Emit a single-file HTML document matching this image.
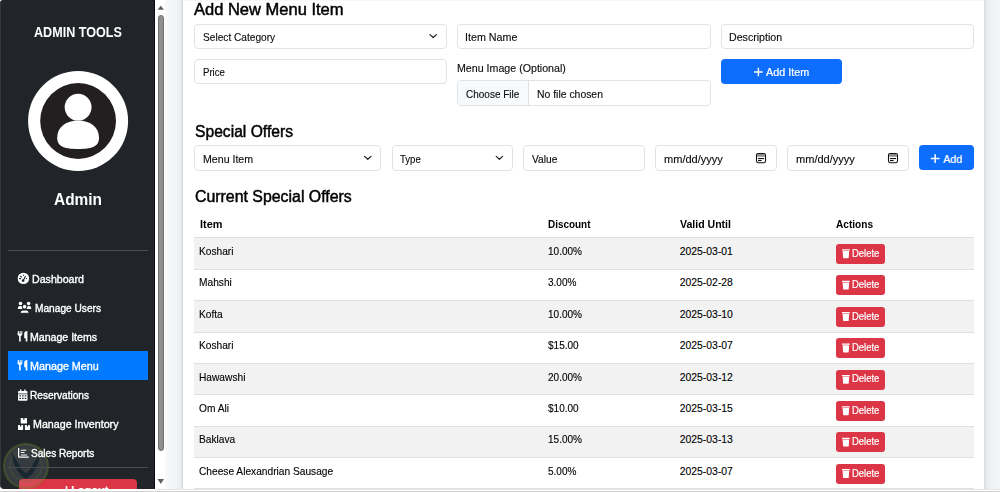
<!DOCTYPE html>
<html><head><meta charset="utf-8">
<style>
*{box-sizing:border-box;margin:0;padding:0}
html,body{width:1000px;height:492px;overflow:hidden;background:#fff}
body{position:relative;font-family:"Liberation Sans",sans-serif;color:#212529}
.a{position:absolute;white-space:nowrap;line-height:1;transform-origin:0 0}
</style></head><body>
<div style="position:absolute;left:155px;top:0px;width:845px;height:489px;background:#f1f3f5"></div>
<div style="position:absolute;left:165px;top:0px;width:18px;height:489px;background:linear-gradient(90deg,#f8f9fa,#f1f2f4 12px,#eaecee 16px,#cfd2d4 18px)"></div>
<div style="position:absolute;left:183px;top:0px;width:801px;height:489px;background:#fff"></div>
<div style="position:absolute;left:984px;top:0px;width:16px;height:489px;background:linear-gradient(90deg,#d9dcdf,#e6e8eb 2px,#eef0f2 5px,#f5f6f7)"></div>
<div style="position:absolute;left:183px;top:0px;width:801px;height:1px;background:#f7f7f7"></div>
<div style="position:absolute;left:155px;top:0px;width:10px;height:489px;background:#fff"></div>
<div style="position:absolute;left:158px;top:15px;width:5.8px;height:436px;background:#8f8f8f;border:1px solid #707070;border-radius:3px"></div>
<svg style="position:absolute;left:0;top:0" width="1000" height="492"><path d="M157.5 9.8 L160.8 5.7 L164 9.8Z" fill="#606060"/><path d="M157.5 479 L160.8 484 L164 479Z" fill="#606060"/></svg>
<div style="position:absolute;left:0px;top:489px;width:1000px;height:2px;background:#fff"></div>
<div style="position:absolute;left:155px;top:489px;width:845px;height:1px;background:#e4e4e4"></div>
<div style="position:absolute;left:0px;top:491px;width:1000px;height:1px;background:#cfcfcf"></div>
<div style="position:absolute;left:0px;top:0px;width:155px;height:489px;background:#212529;border-radius:3px 0 0 4px;border-left:1px solid #34383d;border-right:1px solid #0c0d0f"></div>
<div style="position:absolute;left:19px;top:479.3px;width:118px;height:9.7px;background:#dc3545;border-radius:4px 4px 0 0"></div>
<div style="position:absolute;left:19px;top:479px;width:118px;height:10px;overflow:hidden"><div style="position:absolute;left:35px;top:6.2px;font-size:11px;line-height:1;color:#fff;font-weight:700;white-space:nowrap">&#x2192;| Logout</div></div>
<svg style="position:absolute;left:0;top:0" width="60" height="492">
<defs><filter id="bl" x="-20%" y="-20%" width="140%" height="140%"><feGaussianBlur stdDeviation="0.6"/></filter></defs>
<g filter="url(#bl)">
<circle cx="26" cy="466" r="21.5" fill="rgba(185,190,195,0.14)"/>
<circle cx="26" cy="466" r="22" fill="none" stroke="rgba(110,150,45,0.36)" stroke-width="1.8"/>
<circle cx="26" cy="465.5" r="16" fill="none" stroke="rgba(95,130,40,0.22)" stroke-width="1.4"/>
<path d="M11.5 452 C13 466 19 475 26 479 C33 475 39 466 40.5 452 C37 458 35 462 33 464 C31 469 28 472 26 473 C24 472 21 469 19 464 C17 462 15 458 11.5 452Z" fill="rgba(5,20,35,0.55)"/>
</g>
</svg>
<div style="position:absolute;left:8px;top:250px;width:140px;height:1px;background:#4b4f54"></div>
<div style="position:absolute;left:8px;top:467px;width:140px;height:1px;background:#4b4f54"></div>
<div style="position:absolute;left:8px;top:351px;width:140px;height:29px;background:#007bff"></div>
<div class="a" style="left:33.90px;top:26px;font-size:13.8px;font-weight:700;color:#fff;transform:scaleX(0.9125);">ADMIN TOOLS</div>
<div class="a" style="left:54.30px;top:192px;font-size:16px;font-weight:700;color:#fff;transform:scaleX(0.9633);">Admin</div>
<div class="a" style="left:32.00px;top:274px;font-size:10.6px;font-weight:400;color:#fff;transform:scaleX(1.0020);-webkit-text-stroke:0.35px #fff;">Dashboard</div>
<div class="a" style="left:34.54px;top:303px;font-size:10.6px;font-weight:400;color:#fff;transform:scaleX(0.9588);-webkit-text-stroke:0.35px #fff;">Manage Users</div>
<div class="a" style="left:30.40px;top:332px;font-size:10.6px;font-weight:400;color:#fff;transform:scaleX(0.9985);-webkit-text-stroke:0.35px #fff;">Manage Items</div>
<div class="a" style="left:30.38px;top:361px;font-size:10.6px;font-weight:400;color:#fff;transform:scaleX(1.0152);-webkit-text-stroke:0.35px #fff;">Manage Menu</div>
<div class="a" style="left:30.15px;top:390px;font-size:10.6px;font-weight:400;color:#fff;transform:scaleX(0.9541);-webkit-text-stroke:0.35px #fff;">Reservations</div>
<div class="a" style="left:32.99px;top:419px;font-size:10.6px;font-weight:400;color:#fff;transform:scaleX(1.0083);-webkit-text-stroke:0.35px #fff;">Manage Inventory</div>
<div class="a" style="left:31.35px;top:448px;font-size:10.6px;font-weight:400;color:#fff;transform:scaleX(0.9508);-webkit-text-stroke:0.35px #fff;">Sales Reports</div>
<svg style="position:absolute;left:0;top:0" width="160" height="492">
<circle cx="78.1" cy="121" r="50" fill="#fff"/>
<circle cx="78.1" cy="121" r="37.9" fill="#231f20"/>
<circle cx="78.1" cy="107.2" r="13.4" fill="#fff"/>
<path d="M57.2 137.5 C57.2 127 66.5 120.6 78.1 120.6 C89.7 120.6 99 127 99 137.5 C99 145.5 94 148.9 78.1 149.1 C62.2 148.9 57.2 145.5 57.2 137.5Z" fill="#fff"/>
</svg>
<svg style="position:absolute;left:0;top:0" width="160" height="492">
<g fill="#fff">
<circle cx="23.4" cy="278.4" r="5.7"/>
</g>
<g fill="#212529" stroke="#212529">
<circle cx="23.4" cy="275.2" r="0.6" stroke="none"/>
<path d="M20.3 276.4 l1.3 0.5" stroke-width="1.1" stroke-linecap="round"/>
<path d="M19.4 278.6 h1.3" stroke-width="1.1" stroke-linecap="round"/>
<circle cx="26.5" cy="278.6" r="0.65" stroke="none"/>
<path d="M23.3 280.5 L25.4 276.5" stroke-width="1.1" stroke-linecap="round"/>
<circle cx="23.1" cy="280.6" r="1.3" stroke="none"/>
</g>
<g fill="#fff">
<circle cx="20.5" cy="303.5" r="1.8"/>
<path d="M17.9 308.9 v-0.9 q0 -2 2 -2 h0.6 q2 0 2 2 v0.9Z"/>
<circle cx="28.6" cy="303.5" r="1.8"/>
<path d="M26.6 308.9 v-0.9 q0 -2 2 -2 h0.6 q2 0 2 2 v0.9Z"/>
</g>
<g fill="#fff" stroke="#212529" stroke-width="1">
<circle cx="24.6" cy="306.7" r="2.3"/>
<path d="M20.3 313.3 v-0.6 q0 -2.6 2.6 -2.6 h3.4 q2.6 0 2.6 2.6 v0.6Z"/>
</g>
<g fill="#fff" transform="translate(0 0)">
<path d="M18 331 h0.9 v2.6 h0.8 v-2.6 h0.9 v2.6 h0.8 v-2.6 h0.9 v3 q0 1.7 -1.6 2 v5.6 h-1.6 v-5.6 q-1.6 -0.3 -1.6 -2Z"/>
<path d="M27.4 331 v10.6 h-1.7 v-3.4 h-1.5 v-4.6 q0 -2.3 3.2 -2.6Z"/>
</g>
<g fill="#fff" transform="translate(0 29)">
<path d="M18 331 h0.9 v2.6 h0.8 v-2.6 h0.9 v2.6 h0.8 v-2.6 h0.9 v3 q0 1.7 -1.6 2 v5.6 h-1.6 v-5.6 q-1.6 -0.3 -1.6 -2Z"/>
<path d="M27.4 331 v10.6 h-1.7 v-3.4 h-1.5 v-4.6 q0 -2.3 3.2 -2.6Z"/>
</g>
<g fill="#fff">
<rect x="20" y="389.5" width="1.4" height="2.5"/><rect x="24.2" y="389.5" width="1.4" height="2.5"/>
<path d="M18 392 q0 -1 1 -1 h7.5 q1 0 1 1 v1.6 h-9.5Z"/>
<path d="M18 394.3 h9.5 v5.5 q0 1 -1 1 h-7.5 q-1 0 -1 -1Z"/>
</g>
<g fill="#212529">
<rect x="19.3" y="395.3" width="1.6" height="1.2"/><rect x="22" y="395.3" width="1.6" height="1.2"/><rect x="24.7" y="395.3" width="1.6" height="1.2"/>
<rect x="19.3" y="397.8" width="1.6" height="1.2"/><rect x="22" y="397.8" width="1.6" height="1.2"/><rect x="24.7" y="397.8" width="1.6" height="1.2"/>
</g>
<g fill="#fff">
<rect x="20.7" y="418" width="6.3" height="5.5" rx="0.6"/>
<rect x="18" y="424.9" width="5.1" height="5.1" rx="0.6"/>
<rect x="24.9" y="424.9" width="5.1" height="5.1" rx="0.6"/>
</g>
<g fill="#212529">
<rect x="23.2" y="418" width="1.3" height="1.6"/>
<rect x="20" y="424.9" width="1.2" height="1.5"/>
<rect x="26.9" y="424.9" width="1.2" height="1.5"/>
</g>
<g fill="#fff">
<path d="M18 448 h1.25 v8.6 h9.55 v1.2 h-9.6 q-1.2 0 -1.2 -1.2Z"/>
<rect x="20.7" y="449.7" width="5.5" height="1.0" rx="0.5"/>
<rect x="20.7" y="452.1" width="3.9" height="1.0" rx="0.5"/>
<rect x="20.7" y="454.5" width="6.5" height="1.0" rx="0.5"/>
</g>
</svg>
<div class="a" style="left:194.00px;top:2px;font-size:15.6px;font-weight:400;color:#000;transform:scaleX(1.0582);-webkit-text-stroke:0.45px #000;">Add New Menu Item</div>
<div style="position:absolute;left:194px;top:24px;width:253px;height:25px;background:#fff;border:1px solid #e1e4e7;border-radius:4px"></div>
<div style="position:absolute;left:457px;top:24px;width:254px;height:25px;background:#fff;border:1px solid #e1e4e7;border-radius:4px"></div>
<div style="position:absolute;left:721px;top:24px;width:253px;height:25px;background:#fff;border:1px solid #e1e4e7;border-radius:4px"></div>
<div class="a" style="left:202.75px;top:33px;font-size:10.4px;font-weight:400;color:#0a0c0e;transform:scaleX(0.9764);-webkit-text-stroke:0.2px rgba(0,0,0,0.6);">Select Category</div>
<div class="a" style="left:465.37px;top:33px;font-size:10.4px;font-weight:400;color:#0a0c0e;transform:scaleX(1.0320);-webkit-text-stroke:0.2px rgba(0,0,0,0.6);">Item Name</div>
<div class="a" style="left:729.40px;top:33px;font-size:10.4px;font-weight:400;color:#0a0c0e;transform:scaleX(1.0231);-webkit-text-stroke:0.2px rgba(0,0,0,0.6);">Description</div>
<div style="position:absolute;left:194px;top:59px;width:253px;height:25px;background:#fff;border:1px solid #e1e4e7;border-radius:4px"></div>
<div class="a" style="left:202.80px;top:68px;font-size:10.4px;font-weight:400;color:#0a0c0e;transform:scaleX(0.9250);-webkit-text-stroke:0.2px rgba(0,0,0,0.6);">Price</div>
<div class="a" style="left:457.40px;top:64px;font-size:10.4px;font-weight:400;color:#0a0c0e;transform:scaleX(1.0245);-webkit-text-stroke:0.2px rgba(0,0,0,0.6);">Menu Image (Optional)</div>
<div style="position:absolute;left:457px;top:80px;width:254px;height:26px;background:#fff;border:1px solid #e1e4e7;border-radius:4px"></div>
<div style="position:absolute;left:458px;top:81px;width:71px;height:24px;background:#f8f9fa;border-right:1px solid #dee2e6;border-radius:3px 0 0 3px"></div>
<div class="a" style="left:465.70px;top:90px;font-size:10.4px;font-weight:400;color:#0a0c0e;transform:scaleX(0.9625);-webkit-text-stroke:0.2px rgba(0,0,0,0.6);">Choose File</div>
<div class="a" style="left:536.70px;top:90px;font-size:10.4px;font-weight:400;color:#0a0c0e;transform:scaleX(1.0015);-webkit-text-stroke:0.2px rgba(0,0,0,0.6);">No file chosen</div>
<div style="position:absolute;left:721px;top:59px;width:121px;height:25px;background:#0d6efd;border-radius:4px"></div>
<div class="a" style="left:766.30px;top:67px;font-size:10.6px;font-weight:400;color:#fff;transform:scaleX(1.0167);-webkit-text-stroke:0.2px #fff;">Add Item</div>
<div class="a" style="left:194.60px;top:124px;font-size:15.6px;font-weight:400;color:#000;transform:scaleX(1.0031);-webkit-text-stroke:0.45px #000;">Special Offers</div>
<div style="position:absolute;left:194px;top:145px;width:187px;height:26px;background:#fff;border:1px solid #e1e4e7;border-radius:4px"></div>
<div style="position:absolute;left:392px;top:145px;width:121px;height:26px;background:#fff;border:1px solid #e1e4e7;border-radius:4px"></div>
<div style="position:absolute;left:523px;top:145px;width:122px;height:26px;background:#fff;border:1px solid #e1e4e7;border-radius:4px"></div>
<div style="position:absolute;left:655px;top:145px;width:122px;height:26px;background:#fff;border:1px solid #e1e4e7;border-radius:4px"></div>
<div style="position:absolute;left:787px;top:145px;width:122px;height:26px;background:#fff;border:1px solid #e1e4e7;border-radius:4px"></div>
<div class="a" style="left:202.75px;top:155px;font-size:10.4px;font-weight:400;color:#0a0c0e;transform:scaleX(1.0204);-webkit-text-stroke:0.2px rgba(0,0,0,0.6);">Menu Item</div>
<div class="a" style="left:400.30px;top:155px;font-size:10.4px;font-weight:400;color:#0a0c0e;transform:scaleX(0.9217);-webkit-text-stroke:0.2px rgba(0,0,0,0.6);">Type</div>
<div class="a" style="left:532.00px;top:155px;font-size:10.4px;font-weight:400;color:#0a0c0e;transform:scaleX(0.9808);-webkit-text-stroke:0.2px rgba(0,0,0,0.6);">Value</div>
<div class="a" style="left:663.70px;top:155px;font-size:10.4px;font-weight:400;color:#0a0c0e;transform:scaleX(1.0625);-webkit-text-stroke:0.2px rgba(0,0,0,0.6);">mm/dd/yyyy</div>
<div class="a" style="left:796.00px;top:155px;font-size:10.4px;font-weight:400;color:#0a0c0e;transform:scaleX(1.0625);-webkit-text-stroke:0.2px rgba(0,0,0,0.6);">mm/dd/yyyy</div>
<div style="position:absolute;left:919px;top:145px;width:55px;height:25px;background:#0d6efd;border-radius:4px"></div>
<div class="a" style="left:943.30px;top:154px;font-size:10.6px;font-weight:400;color:#fff;-webkit-text-stroke:0.2px #fff;">Add</div>
<div class="a" style="left:194.70px;top:189px;font-size:15.6px;font-weight:400;color:#000;transform:scaleX(1.0182);-webkit-text-stroke:0.45px #000;">Current Special Offers</div>
<div style="position:absolute;left:194px;top:237px;width:780px;height:1px;background:#dcdddf"></div>
<div class="a" style="left:199.50px;top:220px;font-size:10.4px;font-weight:700;color:#000;transform:scaleX(1.0476);">Item</div>
<div class="a" style="left:547.90px;top:220px;font-size:10.4px;font-weight:700;color:#000;transform:scaleX(0.9556);">Discount</div>
<div class="a" style="left:679.75px;top:220px;font-size:10.4px;font-weight:700;color:#000;transform:scaleX(1.0150);">Valid Until</div>
<div class="a" style="left:836.10px;top:220px;font-size:10.4px;font-weight:700;color:#000;transform:scaleX(0.9737);">Actions</div>
<div style="position:absolute;left:194px;top:238px;width:780px;height:32px;background:#f2f2f2;border-bottom:1px solid #dfe0e2"></div>
<div class="a" style="left:199.30px;top:247px;font-size:10.4px;font-weight:400;color:#000;transform:scaleX(0.9800);-webkit-text-stroke:0.2px rgba(0,0,0,0.6);">Koshari</div>
<div class="a" style="left:547.60px;top:247px;font-size:10.4px;font-weight:400;color:#000;transform:scaleX(0.9650);-webkit-text-stroke:0.2px rgba(0,0,0,0.6);">10.00%</div>
<div class="a" style="left:679.75px;top:247px;font-size:10.4px;font-weight:400;color:#000;-webkit-text-stroke:0.2px rgba(0,0,0,0.6);">2025-03-01</div>
<div style="position:absolute;left:836px;top:243.9px;width:48.6px;height:20px;background:#dc3545;border-radius:3px"></div>
<div class="a" style="left:852.37px;top:249px;font-size:10.2px;font-weight:400;color:#fff;transform:scaleX(0.9286);-webkit-text-stroke:0.2px #fff;">Delete</div>
<div style="position:absolute;left:194px;top:270px;width:780px;height:31px;border-bottom:1px solid #dfe0e2"></div>
<div class="a" style="left:199.30px;top:278px;font-size:10.4px;font-weight:400;color:#000;transform:scaleX(0.9800);-webkit-text-stroke:0.2px rgba(0,0,0,0.6);">Mahshi</div>
<div class="a" style="left:547.60px;top:278px;font-size:10.4px;font-weight:400;color:#000;transform:scaleX(0.9650);-webkit-text-stroke:0.2px rgba(0,0,0,0.6);">3.00%</div>
<div class="a" style="left:679.75px;top:278px;font-size:10.4px;font-weight:400;color:#000;-webkit-text-stroke:0.2px rgba(0,0,0,0.6);">2025-02-28</div>
<div style="position:absolute;left:836px;top:275.3px;width:48.6px;height:20px;background:#dc3545;border-radius:3px"></div>
<div class="a" style="left:852.37px;top:280px;font-size:10.2px;font-weight:400;color:#fff;transform:scaleX(0.9286);-webkit-text-stroke:0.2px #fff;">Delete</div>
<div style="position:absolute;left:194px;top:301px;width:780px;height:32px;background:#f2f2f2;border-bottom:1px solid #dfe0e2"></div>
<div class="a" style="left:199.30px;top:310px;font-size:10.4px;font-weight:400;color:#000;transform:scaleX(0.9800);-webkit-text-stroke:0.2px rgba(0,0,0,0.6);">Kofta</div>
<div class="a" style="left:547.60px;top:310px;font-size:10.4px;font-weight:400;color:#000;transform:scaleX(0.9650);-webkit-text-stroke:0.2px rgba(0,0,0,0.6);">10.00%</div>
<div class="a" style="left:679.75px;top:310px;font-size:10.4px;font-weight:400;color:#000;-webkit-text-stroke:0.2px rgba(0,0,0,0.6);">2025-03-10</div>
<div style="position:absolute;left:836px;top:306.7px;width:48.6px;height:20px;background:#dc3545;border-radius:3px"></div>
<div class="a" style="left:852.37px;top:312px;font-size:10.2px;font-weight:400;color:#fff;transform:scaleX(0.9286);-webkit-text-stroke:0.2px #fff;">Delete</div>
<div style="position:absolute;left:194px;top:333px;width:780px;height:31px;border-bottom:1px solid #dfe0e2"></div>
<div class="a" style="left:199.30px;top:341px;font-size:10.4px;font-weight:400;color:#000;transform:scaleX(0.9800);-webkit-text-stroke:0.2px rgba(0,0,0,0.6);">Koshari</div>
<div class="a" style="left:547.60px;top:341px;font-size:10.4px;font-weight:400;color:#000;transform:scaleX(0.9650);-webkit-text-stroke:0.2px rgba(0,0,0,0.6);">$15.00</div>
<div class="a" style="left:679.75px;top:341px;font-size:10.4px;font-weight:400;color:#000;-webkit-text-stroke:0.2px rgba(0,0,0,0.6);">2025-03-07</div>
<div style="position:absolute;left:836px;top:338.1px;width:48.6px;height:20px;background:#dc3545;border-radius:3px"></div>
<div class="a" style="left:852.37px;top:343px;font-size:10.2px;font-weight:400;color:#fff;transform:scaleX(0.9286);-webkit-text-stroke:0.2px #fff;">Delete</div>
<div style="position:absolute;left:194px;top:364px;width:780px;height:31px;background:#f2f2f2;border-bottom:1px solid #dfe0e2"></div>
<div class="a" style="left:199.30px;top:373px;font-size:10.4px;font-weight:400;color:#000;transform:scaleX(0.9800);-webkit-text-stroke:0.2px rgba(0,0,0,0.6);">Hawawshi</div>
<div class="a" style="left:547.60px;top:373px;font-size:10.4px;font-weight:400;color:#000;transform:scaleX(0.9650);-webkit-text-stroke:0.2px rgba(0,0,0,0.6);">20.00%</div>
<div class="a" style="left:679.75px;top:373px;font-size:10.4px;font-weight:400;color:#000;-webkit-text-stroke:0.2px rgba(0,0,0,0.6);">2025-03-12</div>
<div style="position:absolute;left:836px;top:369.5px;width:48.6px;height:20px;background:#dc3545;border-radius:3px"></div>
<div class="a" style="left:852.37px;top:374px;font-size:10.2px;font-weight:400;color:#fff;transform:scaleX(0.9286);-webkit-text-stroke:0.2px #fff;">Delete</div>
<div style="position:absolute;left:194px;top:395px;width:780px;height:32px;border-bottom:1px solid #dfe0e2"></div>
<div class="a" style="left:199.30px;top:404px;font-size:10.4px;font-weight:400;color:#000;transform:scaleX(0.9800);-webkit-text-stroke:0.2px rgba(0,0,0,0.6);">Om Ali</div>
<div class="a" style="left:547.60px;top:404px;font-size:10.4px;font-weight:400;color:#000;transform:scaleX(0.9650);-webkit-text-stroke:0.2px rgba(0,0,0,0.6);">$10.00</div>
<div class="a" style="left:679.75px;top:404px;font-size:10.4px;font-weight:400;color:#000;-webkit-text-stroke:0.2px rgba(0,0,0,0.6);">2025-03-15</div>
<div style="position:absolute;left:836px;top:400.9px;width:48.6px;height:20px;background:#dc3545;border-radius:3px"></div>
<div class="a" style="left:852.37px;top:406px;font-size:10.2px;font-weight:400;color:#fff;transform:scaleX(0.9286);-webkit-text-stroke:0.2px #fff;">Delete</div>
<div style="position:absolute;left:194px;top:427px;width:780px;height:31px;background:#f2f2f2;border-bottom:1px solid #dfe0e2"></div>
<div class="a" style="left:199.30px;top:435px;font-size:10.4px;font-weight:400;color:#000;transform:scaleX(0.9800);-webkit-text-stroke:0.2px rgba(0,0,0,0.6);">Baklava</div>
<div class="a" style="left:547.60px;top:435px;font-size:10.4px;font-weight:400;color:#000;transform:scaleX(0.9650);-webkit-text-stroke:0.2px rgba(0,0,0,0.6);">15.00%</div>
<div class="a" style="left:679.75px;top:435px;font-size:10.4px;font-weight:400;color:#000;-webkit-text-stroke:0.2px rgba(0,0,0,0.6);">2025-03-13</div>
<div style="position:absolute;left:836px;top:432.3px;width:48.6px;height:20px;background:#dc3545;border-radius:3px"></div>
<div class="a" style="left:852.37px;top:437px;font-size:10.2px;font-weight:400;color:#fff;transform:scaleX(0.9286);-webkit-text-stroke:0.2px #fff;">Delete</div>
<div style="position:absolute;left:194px;top:458px;width:780px;height:31px;border-bottom:1px solid #dfe0e2"></div>
<div class="a" style="left:199.30px;top:467px;font-size:10.4px;font-weight:400;color:#000;transform:scaleX(0.9800);-webkit-text-stroke:0.2px rgba(0,0,0,0.6);">Cheese Alexandrian Sausage</div>
<div class="a" style="left:547.60px;top:467px;font-size:10.4px;font-weight:400;color:#000;transform:scaleX(0.9650);-webkit-text-stroke:0.2px rgba(0,0,0,0.6);">5.00%</div>
<div class="a" style="left:679.75px;top:467px;font-size:10.4px;font-weight:400;color:#000;-webkit-text-stroke:0.2px rgba(0,0,0,0.6);">2025-03-07</div>
<div style="position:absolute;left:836px;top:463.7px;width:48.6px;height:20px;background:#dc3545;border-radius:3px"></div>
<div class="a" style="left:852.37px;top:469px;font-size:10.2px;font-weight:400;color:#fff;transform:scaleX(0.9286);-webkit-text-stroke:0.2px #fff;">Delete</div>
<svg style="position:absolute;left:0;top:0" width="1000" height="492"><path d="M430.0 34.65 L433.2 37.550000000000004 L436.4 34.65" fill="none" stroke="#212529" stroke-width="1.25" stroke-linecap="round" stroke-linejoin="round"/><path d="M364.6 156.35000000000002 L367.8 159.25 L371.0 156.35000000000002" fill="none" stroke="#212529" stroke-width="1.25" stroke-linecap="round" stroke-linejoin="round"/><path d="M496.2 156.35000000000002 L499.4 159.25 L502.59999999999997 156.35000000000002" fill="none" stroke="#212529" stroke-width="1.25" stroke-linecap="round" stroke-linejoin="round"/><rect x="756.5" y="153.5" width="9" height="9.2" rx="1.6" fill="#fff" stroke="#111" stroke-width="1.1"/><rect x="757" y="154" width="8" height="2.8" rx="0.6" fill="#8c8c8c"/><rect x="758" y="158" width="6" height="1.1" fill="#111"/><rect x="758" y="160" width="3.6" height="1.1" fill="#111"/><rect x="888.5" y="153.5" width="9" height="9.2" rx="1.6" fill="#fff" stroke="#111" stroke-width="1.1"/><rect x="889" y="154" width="8" height="2.8" rx="0.6" fill="#8c8c8c"/><rect x="890" y="158" width="6" height="1.1" fill="#111"/><rect x="890" y="160" width="3.6" height="1.1" fill="#111"/><path d="M758.35 67.8 v8.5 M754.1 72.05 h8.5" stroke="#fff" stroke-width="1.5"/><path d="M935.15 154.2 v8.7 M930.8 158.54999999999998 h8.7" stroke="#fff" stroke-width="1.5"/><path d="M842 249.3 h7.8 v1.3 h-7.8Z M842.6 251.10000000000002 h6.6 l-0.5 6.5 q0 0.6 -0.6 0.6 h-4.4 q-0.6 0 -0.6 -0.6Z" fill="#fff"/><path d="M842 280.7 h7.8 v1.3 h-7.8Z M842.6 282.5 h6.6 l-0.5 6.5 q0 0.6 -0.6 0.6 h-4.4 q-0.6 0 -0.6 -0.6Z" fill="#fff"/><path d="M842 312.1 h7.8 v1.3 h-7.8Z M842.6 313.90000000000003 h6.6 l-0.5 6.5 q0 0.6 -0.6 0.6 h-4.4 q-0.6 0 -0.6 -0.6Z" fill="#fff"/><path d="M842 343.5 h7.8 v1.3 h-7.8Z M842.6 345.3 h6.6 l-0.5 6.5 q0 0.6 -0.6 0.6 h-4.4 q-0.6 0 -0.6 -0.6Z" fill="#fff"/><path d="M842 374.9 h7.8 v1.3 h-7.8Z M842.6 376.7 h6.6 l-0.5 6.5 q0 0.6 -0.6 0.6 h-4.4 q-0.6 0 -0.6 -0.6Z" fill="#fff"/><path d="M842 406.3 h7.8 v1.3 h-7.8Z M842.6 408.1 h6.6 l-0.5 6.5 q0 0.6 -0.6 0.6 h-4.4 q-0.6 0 -0.6 -0.6Z" fill="#fff"/><path d="M842 437.7 h7.8 v1.3 h-7.8Z M842.6 439.5 h6.6 l-0.5 6.5 q0 0.6 -0.6 0.6 h-4.4 q-0.6 0 -0.6 -0.6Z" fill="#fff"/><path d="M842 469.1 h7.8 v1.3 h-7.8Z M842.6 470.90000000000003 h6.6 l-0.5 6.5 q0 0.6 -0.6 0.6 h-4.4 q-0.6 0 -0.6 -0.6Z" fill="#fff"/></svg>
</body></html>
